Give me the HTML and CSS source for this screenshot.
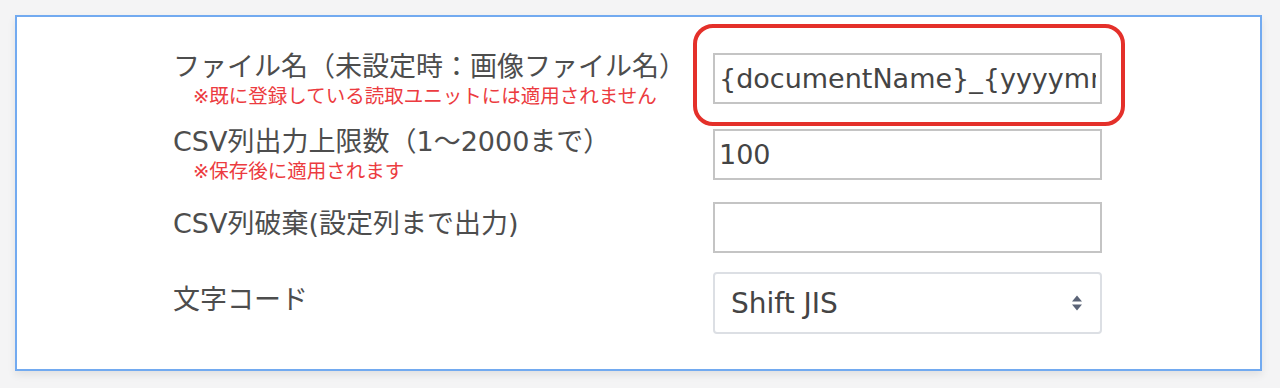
FILE: index.html
```html
<!DOCTYPE html>
<html lang="ja">
<head>
<meta charset="utf-8">
<title>設定</title>
<link rel="stylesheet" href="styles.css">
</head>
<body>
<div class="panel">
  <div class="form">
    <div class="row">
      <div class="label-block">
        <div class="label">ファイル名（未設定時：画像ファイル名）</div>
        <div class="note">※既に登録している読取ユニットには適用されません</div>
      </div>
      <div class="field">
        <div class="text-input"><span class="clip">{documentName}_{yyyymmdd}</span></div>
        <div class="highlight"></div>
      </div>
    </div>
    <div class="row">
      <div class="label-block">
        <div class="label">CSV列出力上限数（1〜2000まで）</div>
        <div class="note">※保存後に適用されます</div>
      </div>
      <div class="field">
        <div class="text-input">100</div>
      </div>
    </div>
    <div class="row">
      <div class="label-block">
        <div class="label single">CSV列破棄(設定列まで出力)</div>
      </div>
      <div class="field">
        <div class="text-input"></div>
      </div>
    </div>
    <div class="row">
      <div class="label-block">
        <div class="label single">文字コード</div>
      </div>
      <div class="field">
        <div class="select">
          <span class="select-value">Shift JIS</span>
          <svg class="select-arrow" width="14" height="22" viewBox="0 0 14 22">
            <path d="M2 9.5 L7 3.5 L12 9.5 Z" fill="#5b6477"/>
            <path d="M2 12.5 L7 18.5 L12 12.5 Z" fill="#5b6477"/>
          </svg>
        </div>
      </div>
    </div>
  </div>
</div>
</body>
</html>
```
FILE: styles.css
```css
html, body {
  margin: 0;
  padding: 0;
}
body {
  background: #f4f4f5;
  width: 1280px;
  height: 388px;
  overflow: hidden;
  padding: 15px 0 0 15px;
  box-sizing: border-box;
  font-family: "DejaVu Sans", "Noto Sans CJK JP", sans-serif;
}
.panel {
  width: 1247px;
  height: 356px;
  box-sizing: border-box;
  background: #ffffff;
  border: 2px solid #72aaf0;
  box-shadow: 0 4px 8px rgba(0, 0, 0, 0.08);
  padding: 23px 0 0 156px;
}
.form {
  display: grid;
  grid-template-rows: 77px 74px 72px 80px;
}
.row {
  display: flex;
  align-items: center;
}
.label-block {
  width: 540px;
  display: flex;
  flex-direction: column;
}
.label {
  font-size: 27px;
  line-height: 36px;
  color: #4d4d4d;
  white-space: nowrap;
}
.label.single {
  padding-bottom: 6px;
}
.note {
  font-size: 19.5px;
  line-height: 24px;
  color: #ec3b40;
  padding-left: 20px;
  white-space: nowrap;
}
.field {
  width: 389px;
  position: relative;
}
.text-input {
  height: 51px;
  box-sizing: border-box;
  border: 2px solid #c4c4c4;
  background: #fff;
  padding: 0 4px;
  font-size: 27px;
  line-height: 47px;
  color: #444;
  white-space: nowrap;
  overflow: hidden;
}
.clip {
  display: block;
  overflow: hidden;
}
.highlight {
  position: absolute;
  left: -20px;
  top: -29px;
  right: -23px;
  bottom: -22px;
  border: 4px solid #e4302a;
  border-radius: 20px;
  pointer-events: none;
}
.select {
  height: 62px;
  box-sizing: border-box;
  border: 2px solid #dcdfe4;
  border-radius: 4px;
  background: #fff;
  display: flex;
  align-items: center;
  justify-content: space-between;
  padding: 0 16px 0 16px;
}
.select-value {
  font-size: 28px;
  color: #444;
}
.select-arrow {
  display: block;
}
```
